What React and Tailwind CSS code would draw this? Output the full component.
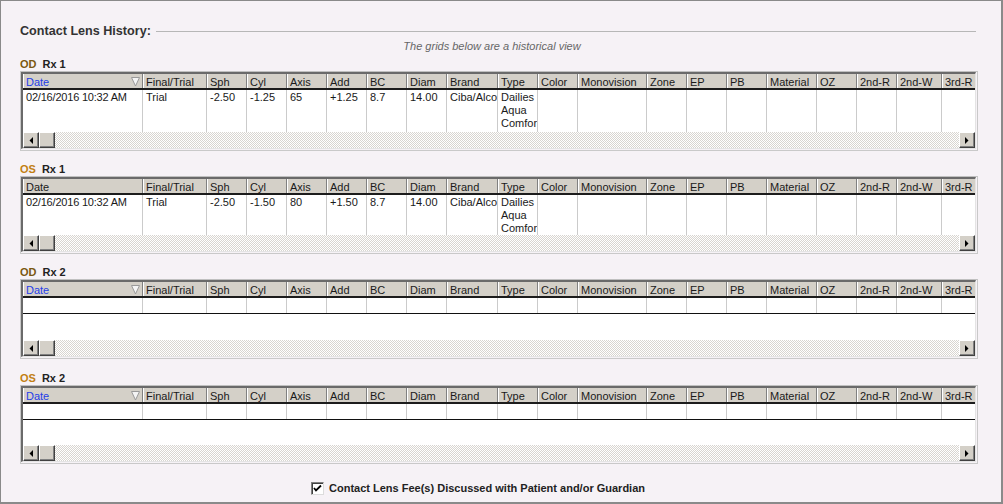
import React from "react";

const COLUMNS = [
  ["Date", 120],
  ["Final/Trial", 64],
  ["Sph", 40],
  ["Cyl", 40],
  ["Axis", 40],
  ["Add", 40],
  ["BC", 40],
  ["Diam", 40],
  ["Brand", 51],
  ["Type", 40],
  ["Color", 40],
  ["Monovision", 69],
  ["Zone", 40],
  ["EP", 40],
  ["PB", 40],
  ["Material", 50],
  ["OZ", 40],
  ["2nd-R", 40],
  ["2nd-W", 45],
  ["3rd-R", 45],
];

const OD_RX1 = ["02/16/2016 10:32 AM", "Trial", "-2.50", "-1.25", "65", "+1.25", "8.7", "14.00", "Ciba/Alcon", ["Dailies", "Aqua", "Comfort"]];
const OS_RX1 = ["02/16/2016 10:32 AM", "Trial", "-2.50", "-1.50", "80", "+1.50", "8.7", "14.00", "Ciba/Alcon", ["Dailies", "Aqua", "Comfort"]];

function SortIcon() {
  return (
    <svg width="9" height="10" viewBox="0 0 9 10" className="shrink-0">
      <polygon points="0.5,0.5 8.5,0.5 4.5,9" fill="#f4f4f4" stroke="#9a9a9a" strokeWidth="1" />
    </svg>
  );
}

function ScrollButton({ dir }) {
  return (
    <div className="flex h-[16px] w-[16px] shrink-0 items-center justify-center border border-t-white border-l-white border-r-[#404040] border-b-[#404040] bg-[#d4d0c8] shadow-[inset_-1px_-1px_#808080]">
      {dir === "left" && (
        <svg width="4" height="7" viewBox="0 0 4 7">
          <polygon points="4,0 4,7 0.5,3.5" fill="#000" />
        </svg>
      )}
      {dir === "right" && (
        <svg width="4" height="7" viewBox="0 0 4 7">
          <polygon points="0,0 0,7 3.5,3.5" fill="#000" />
        </svg>
      )}
    </div>
  );
}

function ScrollBar() {
  return (
    <div className="flex h-[16px]">
      <ScrollButton dir="left" />
      <ScrollButton />
      <div className="flex-1 bg-[repeating-conic-gradient(#d8d5d0_0_25%,#ffffff_0_50%)] bg-[length:2px_2px]" />
      <ScrollButton dir="right" />
    </div>
  );
}

function HeaderRow({ sortable }) {
  return (
    <div className="flex h-[16px] border-b-2 border-b-[#1c1c1c]">
      {COLUMNS.map(([label, width], i) => (
        <div
          key={label}
          style={{ width }}
          className="flex h-[14px] shrink-0 items-center justify-between overflow-hidden whitespace-nowrap border-l border-r border-l-white border-r-[#808080] bg-[#d4d0c8] pl-[2px] pr-[2px] pt-px leading-[14px]"
        >
          <span className={i === 0 && sortable ? "text-[#1f3ee8]" : "text-[#1a1a1a]"}>{label}</span>
          {i === 0 && sortable && <SortIcon />}
        </div>
      ))}
    </div>
  );
}

function DataGrid({ sortable, row, rowHeight }) {
  return (
    <div className="w-[958px] border border-[#c9c9c9] border-t-[#c0c0c0] pb-px pr-px">
      <div className="overflow-hidden border-l-2 border-t-2 border-r border-b border-l-[#6a6a6a] border-t-[#6a6a6a] border-r-[#e4e4e4] border-b-[#e4e4e4] bg-white">
        <HeaderRow sortable={sortable} />
        <div className="flex" style={{ height: rowHeight }}>
          {COLUMNS.map(([label, width], i) => {
            const value = row[i];
            return (
              <div
                key={label}
                style={{ width }}
                className="shrink-0 overflow-hidden border-r border-r-[#cbcbcb] pl-[3px] pt-[1px] leading-[13px] text-[#1a1a1a]"
              >
                {Array.isArray(value)
                  ? value.map((line) => (
                      <div key={line} className="whitespace-nowrap">
                        {line}
                      </div>
                    ))
                  : value && <div className={i === 0 ? "whitespace-nowrap tracking-[-0.2px]" : "whitespace-nowrap"}>{value}</div>}
              </div>
            );
          })}
        </div>
        <ScrollBar />
      </div>
    </div>
  );
}

function EmptyGrid({ whiteHeight }) {
  return (
    <div className="w-[958px] border border-[#c9c9c9] border-t-[#c0c0c0] pb-px pr-px">
      <div className="overflow-hidden border-l-2 border-t-2 border-r border-b border-l-[#6a6a6a] border-t-[#6a6a6a] border-r-[#e4e4e4] border-b-[#e4e4e4] bg-white">
        <HeaderRow sortable />
        <div className="flex h-[16px] border-b border-b-[#111]">
          {COLUMNS.map(([label, width]) => (
            <div key={label} style={{ width }} className="shrink-0 border-r border-r-[#cbcbcb]" />
          ))}
        </div>
        <div style={{ height: whiteHeight }} />
        <ScrollBar />
      </div>
    </div>
  );
}

function GridLabel({ eye, rx, top }) {
  return (
    <div className="flex items-end font-bold leading-[13px]" style={{ height: top }}>
      <span className={eye === "OD" ? "text-[#7a5810]" : "text-[#c27f12]"}>{eye}</span>
      <span className="ml-[6px] text-[#222]">{rx}</span>
    </div>
  );
}

function Checkbox() {
  return (
    <div className="flex h-[13px] w-[13px] items-center justify-center border border-t-[#808080] border-l-[#808080] border-r-[#dcdcdc] border-b-[#dcdcdc] bg-white shadow-[inset_1px_1px_#404040]">
      <svg width="9" height="9" viewBox="0 0 9 9">
        <path d="M1 4 L3 6.5 L8 1.5" fill="none" stroke="#000" strokeWidth="1.8" />
      </svg>
    </div>
  );
}

export default function App() {
  return (
    <div className="h-[504px] w-[1003px] overflow-hidden border-l border-t border-r-2 border-b-2 border-[#8a8a8a] bg-[#f6f2f6] pl-[19px] pt-[21px] font-['Liberation_Sans',Arial,sans-serif] text-[11px]">
      <div className="flex h-[18px] w-[956px] items-center">
        <span className="whitespace-nowrap text-[12.6px] font-bold text-[#333]">Contact Lens History:</span>
        <div className="ml-[5px] mt-[1px] h-px flex-1 bg-[#b7b7b7]" />
      </div>
      <div className="flex h-[13px] w-[944px] justify-center italic leading-[13px] text-[#666]">
        The grids below are a historical view
      </div>

      <GridLabel eye="OD" rx="Rx 1" top={18} />
      <DataGrid sortable row={OD_RX1} rowHeight={42} />

      <GridLabel eye="OS" rx="Rx 1" top={25} />
      <DataGrid row={OS_RX1} rowHeight={40} />

      <GridLabel eye="OD" rx="Rx 2" top={25} />
      <EmptyGrid whiteHeight={26} />

      <GridLabel eye="OS" rx="Rx 2" top={26} />
      <EmptyGrid whiteHeight={25} />

      <div className="ml-[291px] mt-[16px] flex items-center gap-[5px]">
        <Checkbox />
        <span className="font-bold text-[#222]">Contact Lens Fee(s) Discussed with Patient and/or Guardian</span>
      </div>
    </div>
  );
}
